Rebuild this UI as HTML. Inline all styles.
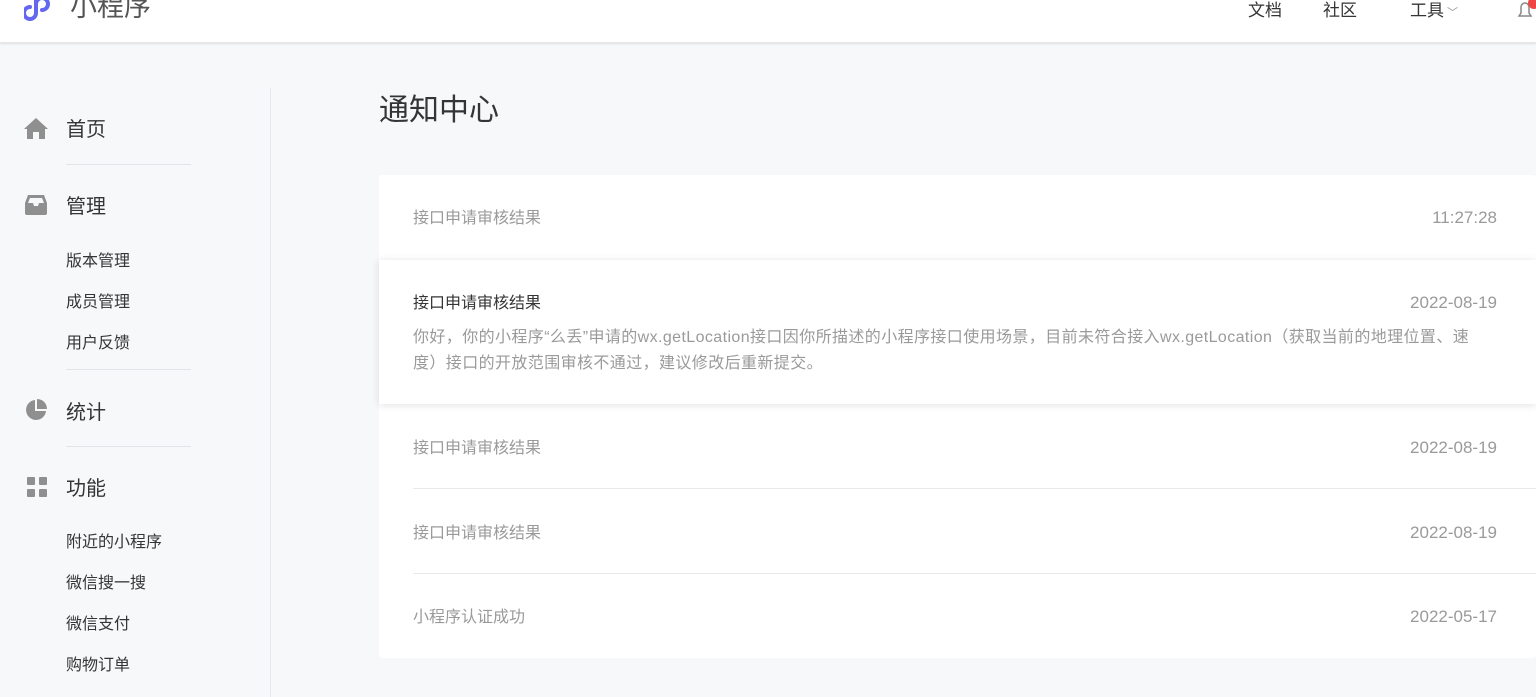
<!DOCTYPE html>
<html><head><meta charset="utf-8"><style>
*{margin:0;padding:0;box-sizing:border-box}
body{width:1536px;height:697px;overflow:hidden;background:#f7f8fa;font-family:"Liberation Sans","Noto Sans CJK SC",sans-serif;position:relative;color:#353535}
.hdr{position:absolute;left:0;top:0;width:1536px;height:43px;background:#fff;box-shadow:0 1px 2px rgba(0,0,0,.1);border-bottom:1px solid #e7e7e7}
.abs{position:absolute;white-space:nowrap}
.nav{font-size:17px;color:#353535;top:0;line-height:22px}
.side{position:absolute;left:270px;top:88px;width:1px;height:609px;background:#e7e7eb}
.m{font-size:20px;color:#353535;left:66px}
.s{font-size:16px;color:#353535;left:66px}
.hr{position:absolute;left:66px;width:125px;height:1px;background:#e4e4e8}
.card{position:absolute;left:379px;top:175px;width:1157px;height:483px;background:#fff;border-radius:3px}
.row{position:absolute;left:34px;right:39px;font-size:16px;color:#9a9a9a;line-height:22px}
.row .d{position:absolute;right:0;top:-1px;font-size:17px}
.line{position:absolute;left:34px;right:0;height:1px;background:#e8e8e8}
.hl{position:absolute;left:0;top:85px;width:1157px;height:144px;background:#fff;box-shadow:0 1px 8px rgba(0,0,0,.12)}
</style></head><body>
<div class="hdr">
<svg class="abs" style="left:24px;top:-6px" width="26" height="30" viewBox="0 0 26 30"><path d="M12 4 V19 a6 6 0 1 1 -6 -6 M12 19 V10 a6 6 0 1 1 6 6" fill="none" stroke="#6467f0" stroke-width="4" stroke-linecap="round"/></svg>
<div class="abs" style="left:70px;top:-9px;font-size:27px;color:#555;line-height:32px">小程序</div>
<div class="abs nav" style="left:1248px">文档</div>
<div class="abs nav" style="left:1323px">社区</div>
<div class="abs nav" style="left:1410px">工具<span style="font-size:11px;color:#999;margin-left:3px">﹀</span></div>
<svg class="abs" style="left:1516px;top:0" width="20" height="20" viewBox="0 0 20 20"><path d="M3 16 H15 L13 13 V7 a4 4 0 0 0 -8 0 V13 Z" fill="none" stroke="#888" stroke-width="1.5"/><circle cx="18" cy="3" r="6" fill="#f04545"/></svg>
</div>
<div class="side"></div>
<svg class="abs" style="left:24px;top:117px" width="24" height="22" viewBox="0 0 24 22"><path d="M12 1 L24 12 H21 V22 H15 V15 H9 V22 H3 V12 H0 Z" fill="#8f8f8f"/></svg>
<div class="abs m" style="top:113px">首页</div>
<div class="hr" style="top:164px"></div>
<svg class="abs" style="left:25px;top:195px" width="22" height="20" viewBox="0 0 22 20"><path d="M3 0 H19 L22 8 V18 a2 2 0 0 1 -2 2 H2 a2 2 0 0 1 -2 -2 V8 Z M3 8 H8 L9 11 H13 L14 8 H19 L17 3 H5 Z" fill="#8f8f8f" fill-rule="evenodd"/></svg>
<div class="abs m" style="top:190px">管理</div>
<div class="abs s" style="top:247px">版本管理</div>
<div class="abs s" style="top:288px">成员管理</div>
<div class="abs s" style="top:329px">用户反馈</div>
<div class="hr" style="top:369px"></div>
<svg class="abs" style="left:25px;top:399px" width="22" height="22" viewBox="0 0 22 22"><path d="M10 1 A10 10 0 1 0 21 12 H10 Z" fill="#8f8f8f"/><path d="M12 0 A10 10 0 0 1 22 10 H12 Z" fill="#8f8f8f"/></svg>
<div class="abs m" style="top:396px">统计</div>
<div class="hr" style="top:446px"></div>
<svg class="abs" style="left:27px;top:477px" width="20" height="20" viewBox="0 0 20 20"><rect x="0" y="0" width="8" height="8" rx="1" fill="#8f8f8f"/><rect x="12" y="0" width="8" height="8" rx="1" fill="#8f8f8f"/><rect x="0" y="12" width="8" height="8" rx="1" fill="#8f8f8f"/><rect x="12" y="12" width="8" height="8" rx="1" fill="#8f8f8f"/></svg>
<div class="abs m" style="top:472px">功能</div>
<div class="abs s" style="top:528px">附近的小程序</div>
<div class="abs s" style="top:569px">微信搜一搜</div>
<div class="abs s" style="top:610px">微信支付</div>
<div class="abs s" style="top:651px">购物订单</div>
<div class="abs" style="left:379px;top:91px;font-size:30px;color:#353535;line-height:40px">通知中心</div>
<div class="card">
<div class="row" style="top:33px">接口申请审核结果<span class="d">11:27:28</span></div>
<div class="hl">
<div class="row" style="top:33px;color:#353535">接口申请审核结果<span class="d" style="color:#9a9a9a">2022-08-19</span></div>
<div class="row" style="top:65px;line-height:26px;letter-spacing:0.4px">你好，你的小程序“么丢”申请的wx.getLocation接口因你所描述的小程序接口使用场景，目前未符合接入wx.getLocation（获取当前的地理位置、速<br>度）接口的开放范围审核不通过，建议修改后重新提交。</div>
</div>
<div class="row" style="top:263px">接口申请审核结果<span class="d">2022-08-19</span></div>
<div class="line" style="top:313px"></div>
<div class="row" style="top:348px">接口申请审核结果<span class="d">2022-08-19</span></div>
<div class="line" style="top:398px"></div>
<div class="row" style="top:432px">小程序认证成功<span class="d">2022-05-17</span></div>
</div>
</body></html>
